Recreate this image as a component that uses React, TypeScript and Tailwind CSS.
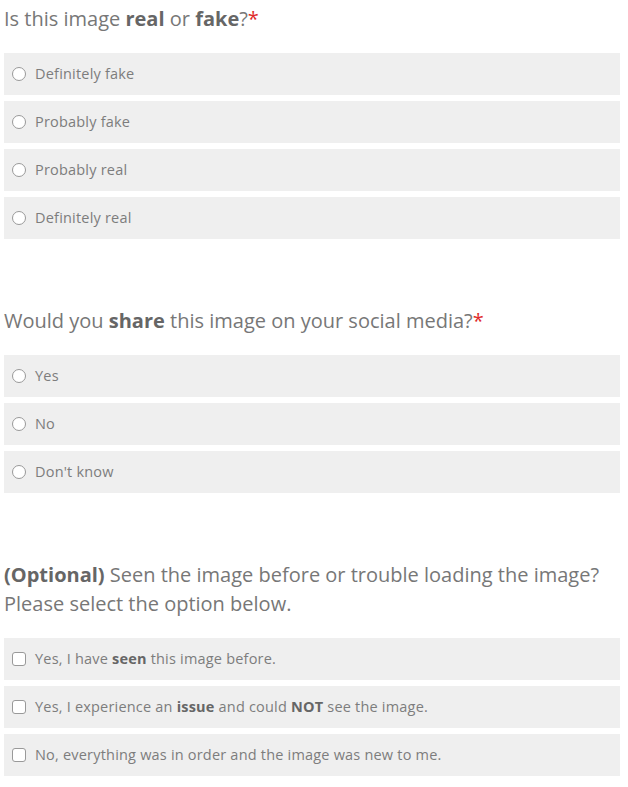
import { ReactNode } from "react";

const font = { fontFamily: '"Open Sans", "Noto Sans", sans-serif' };

function Radio() {
  return (
    <span className="w-[14px] h-[14px] rounded-full border border-[#999] bg-white shrink-0" />
  );
}

function Check() {
  return (
    <span className="w-[14px] h-[14px] rounded-[3px] border border-[#999] bg-white shrink-0" />
  );
}

function Option({ kind, children }: { kind: "radio" | "check"; children: ReactNode }) {
  return (
    <label className="flex items-center gap-[9px] h-[42px] pl-[8px] bg-[#efefef] text-[14.5px] tracking-[0.2px] text-[#7d7d7d]">
      {kind === "radio" ? <Radio /> : <Check />}
      <span>{children}</span>
    </label>
  );
}

function Question({ title, children }: { title: ReactNode; children: ReactNode }) {
  return (
    <div className="flex flex-col">
      <div className="text-[20px] leading-[29px] text-[#777]">{title}</div>
      <div className="flex flex-col gap-[6px] mt-[20px]">{children}</div>
    </div>
  );
}

export default function App() {
  const star = <span className="text-[#e02b2b]">*</span>;
  return (
    <div className="w-[628px] h-[787px] bg-white overflow-hidden" style={font}>
      <div className="flex flex-col gap-[67px] pt-[4px] pl-[4px] pr-[8px]">
        <Question
          title={
            <>
              Is this image <b className="font-bold text-[#666]">real</b> or{" "}
              <b className="font-bold text-[#666]">fake</b>?{star}
            </>
          }
        >
          <Option kind="radio">Definitely fake</Option>
          <Option kind="radio">Probably fake</Option>
          <Option kind="radio">Probably real</Option>
          <Option kind="radio">Definitely real</Option>
        </Question>

        <Question
          title={
            <>
              Would you <b className="font-bold text-[#666]">share</b> this image on your social media?{star}
            </>
          }
        >
          <Option kind="radio">Yes</Option>
          <Option kind="radio">No</Option>
          <Option kind="radio">Don't know</Option>
        </Question>

        <Question
          title={
            <>
              <span className="whitespace-nowrap">
                <b className="font-bold text-[#666]">(Optional)</b> Seen the image before or trouble loading the image?
              </span>
              <br />
              Please select the option below.
            </>
          }
        >
          <Option kind="check">
            Yes, I have <b className="font-bold text-[#666]">seen</b> this image before.
          </Option>
          <Option kind="check">
            Yes, I experience an <b className="font-bold text-[#666]">issue</b> and could{" "}
            <b className="font-bold text-[#666]">NOT</b> see the image.
          </Option>
          <Option kind="check">No, everything was in order and the image was new to me.</Option>
        </Question>
      </div>
    </div>
  );
}
